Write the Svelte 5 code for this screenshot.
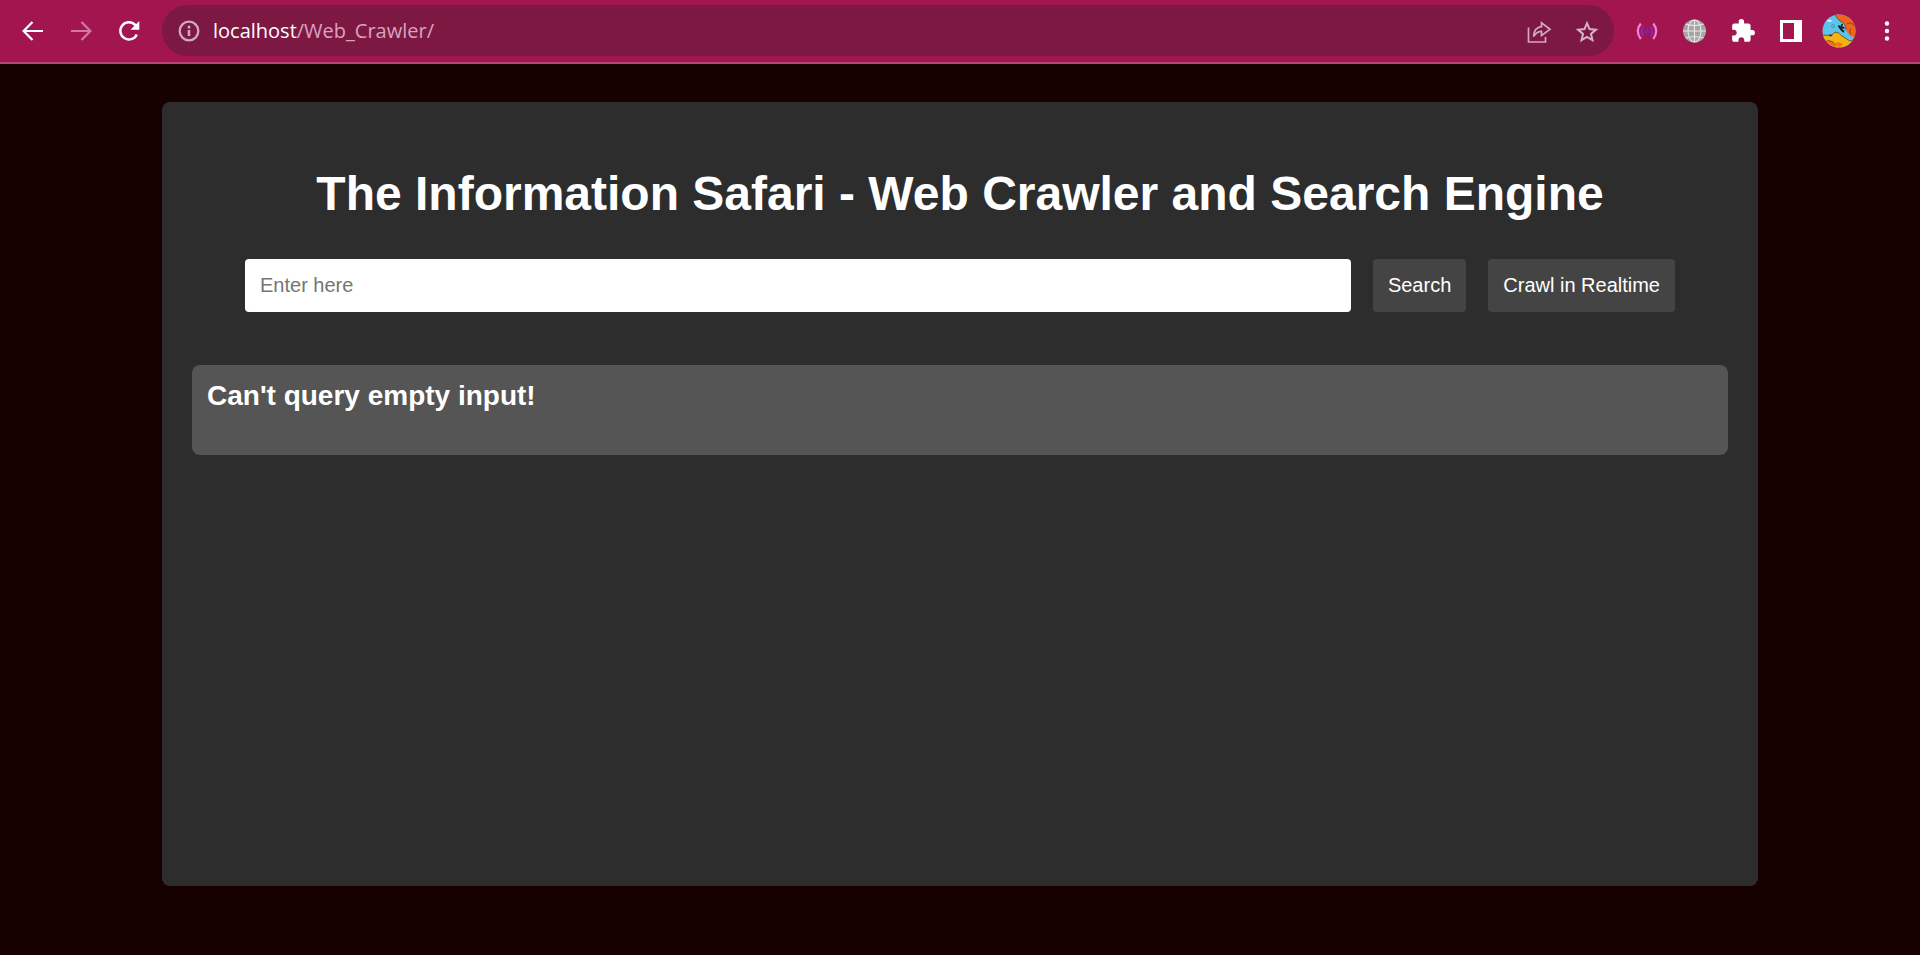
<script>
  let query = $state('');
  let address = $state('localhost/Web_Crawler/');
</script>

<div class="window">
  <header class="toolbar">
    <button class="tool" aria-label="Back">
      <svg width="30" height="30" viewBox="0 0 30 30" fill="none" stroke="#fff" stroke-width="2.2">
        <path d="M25 15H6M14.5 6L5.600 15l8.900 9" />
      </svg>
    </button>
    <button class="tool" aria-label="Forward" disabled>
      <svg width="30" height="30" viewBox="0 0 30 30" fill="none" stroke="#d277a3" stroke-width="2.2">
        <path d="M5 15h19M15.500 6l8.900 9-8.900 9" />
      </svg>
    </button>
    <button class="tool" aria-label="Reload">
      <svg width="30" height="30" viewBox="0 0 30 30">
        <path d="M22.800 18.400A8.600 8.600 0 1 1 21.600 9.400" fill="none" stroke="#fff" stroke-width="2.4" />
        <path d="M25.300 5v8.800h-8.800z" fill="#fff" />
      </svg>
    </button>

    <div class="omnibox">
      <button class="site" aria-label="View site information">
        <svg width="24" height="24" viewBox="0 0 24 24">
          <circle cx="12" cy="12" r="9.300" fill="none" stroke="#cdaabd" stroke-width="2.3" />
          <path d="M10.700 11h2.600v6h-2.600zM10.700 6.800h2.600v2.600h-2.600z" fill="#cdaabd" />
        </svg>
      </button>
      <a class="url" href={'http://' + address}>localhost<span>/Web_Crawler/</span></a>
      <button class="tool" aria-label="Share this page">
        <svg width="30" height="30" viewBox="0 0 30 30" fill="none" stroke="#cfa9bd" stroke-width="1.700">
          <path d="M4.500 11.500V26H21.500V21" />
          <path d="M9.500 20.500C10 14.500 13 11 17.500 10.600V6.800L26 13.300L17.500 19.600V15.400C14 15.400 11.700 17 9.500 20.500Z" />
        </svg>
      </button>
      <button class="tool" aria-label="Bookmark this page">
        <svg width="30" height="30" viewBox="0 0 30 30" fill="none" stroke="#d3b4c4" stroke-width="2">
          <path d="M15 7.200l2.500 5.900 6.400.600-4.900 4.200 1.500 6.300-5.500-3.300-5.500 3.300 1.500-6.300-4.900-4.200 6.400-.600z" />
        </svg>
      </button>
    </div>

    <button class="tool" aria-label="Signal extension">
      <svg width="30" height="30" viewBox="0 0 30 30" fill="none" stroke-width="2.2">
        <path d="M8.800 7.500q-6 7.500 0 15.500M21.200 7.500q6 7.500 0 15.500" stroke="#ee86dc" />
        <path d="M11.500 10.500q-3.800 4.700 0 9.400M18.500 10.500q3.800 4.700 0 9.400" stroke="#a01f9f" />
        <circle cx="15" cy="15.200" r="2.500" fill="#6f28ac" />
      </svg>
    </button>
    <button class="tool" aria-label="Web extension">
      <svg width="30" height="30" viewBox="0 0 30 30">
        <circle cx="14.500" cy="15" r="11.500" fill="#a5a5a5" />
        <g fill="none" stroke="#e8e8e8" stroke-width="1.100">
          <ellipse cx="14.500" cy="15" rx="6.500" ry="11" />
          <path d="M14.500 4v22M3 15h23M5.500 8q9 3 18 0M5.500 22q9-3 18 0" />
        </g>
      </svg>
    </button>
    <button class="tool" aria-label="Extensions">
      <svg width="26" height="26" viewBox="0 0 24 24" fill="#fff">
        <path d="M20.500 11H19V7c0-1.100-.9-2-2-2h-4V3.500a2.500 2.500 0 0 0-5 0V5H4c-1.100 0-1.990.9-1.990 2v3.800H3.500c1.490 0 2.700 1.210 2.700 2.700s-1.210 2.700-2.700 2.700H2V20c0 1.100.9 2 2 2h3.800v-1.500c0-1.490 1.210-2.700 2.700-2.700 1.490 0 2.700 1.210 2.700 2.700V22H17c1.100 0 2-.9 2-2v-4h1.500a2.500 2.500 0 0 0 0-5z" />
      </svg>
    </button>
    <button class="tool" aria-label="Side panel">
      <svg width="22" height="22" viewBox="0 0 22 22">
        <path d="M0 0h22v22H0zM3 3v16h11V3z" fill="#fff" fill-rule="evenodd" />
      </svg>
    </button>
    <button class="tool" aria-label="Profile">
      <svg width="34" height="34" viewBox="0 0 34 34">
        <defs><clipPath id="face"><circle cx="17" cy="17" r="16.500" /></clipPath></defs>
        <g clip-path="url(#face)">
          <path d="M0 0h34v34H0z" fill="#5cc3ea" />
          <path d="M13 0q1 4 5 7 6 2 6 9l4 6 6 2V0z" fill="#f3651c" />
          <path d="M0 21q5 0 9 1l4-4q4 0 7 4l8 5 3-1 3 1v8H0z" fill="#f6b30d" />
          <path d="M2 28q5-3 9 0l3 6H2zM13 29q4-2 8 1l-4 4z" fill="#ee751b" />
          <path d="M13 0q1 4 5 7 6 2 6 9M0 21q5 0 9 1l4-4q4 0 7 4l8 5 3-1M2 28q5-3 9 0l3 4M25 10q5-3 7 2M29 14q-3 3 0 6" fill="none" stroke="#5a4528" stroke-width=".8" />
          <path d="M16.500 11.500q2 4 5.500 6.500M20.500 10q-3 3.500 2 4" fill="none" stroke="#15191e" stroke-width="1.700" />
          <path d="M7 20l2 2.500 1.500-1.500z" fill="#15191e" />
          <path d="M4.500 7q3-3 6 0-3 2-6 0z" fill="#d8eef5" />
          <circle cx="11" cy="12" r="1.500" fill="none" stroke="#3f93b4" stroke-width=".8" />
        </g>
      </svg>
    </button>
    <button class="tool" aria-label="Menu">
      <svg width="30" height="30" viewBox="0 0 30 30" fill="#fff">
        <circle cx="15" cy="7.500" r="2.200" /><circle cx="15" cy="15" r="2.200" /><circle cx="15" cy="22.500" r="2.200" />
      </svg>
    </button>
  </header>

  <main class="card">
    <h1>The Information Safari - Web Crawler and Search Engine</h1>
    <form onsubmit={(event) => event.preventDefault()}>
      <input type="text" aria-label="Search query" placeholder="Enter here" bind:value={query} />
      <button class="action" type="submit">Search</button>
      <button class="action" type="button">Crawl in Realtime</button>
    </form>
    <section class="result">
      <h2>Can't query empty input!</h2>
    </section>
  </main>
</div>

<style>
  :global(body) {
    margin: 0;
    background: #170000;
  }

  .window {
    box-sizing: border-box;
    min-height: 100vh;
    display: flex;
    flex-direction: column;
    padding-bottom: 69px;
    font-family: 'Liberation Sans', Arial, sans-serif;
    color: #fff;
  }

  button {
    border: 0;
    padding: 0;
    background: none;
    color: inherit;
    font: inherit;
  }

  svg {
    display: block;
  }

  .toolbar {
    display: flex;
    align-items: center;
    padding: 5px 9px 6px;
    background: #a2154f;
    border-bottom: 2px solid #b44778;
  }

  .tool {
    flex: none;
    width: 48px;
    height: 48px;
    display: grid;
    place-items: center;
  }

  .omnibox {
    flex: 1;
    box-sizing: border-box;
    height: 51px;
    margin: 0 9px;
    padding: 0 3px 0 15px;
    display: flex;
    align-items: center;
    border-radius: 26px;
    background: #7d1843;
  }

  .site {
    width: 24px;
    height: 24px;
  }

  .url {
    flex: 1;
    margin-left: 12px;
    font-family: 'Open Sans', sans-serif;
    font-size: 20px;
    line-height: 28px;
    color: #fff;
    text-decoration: none;
  }

  .url span {
    color: #d8a3bd;
  }

  .card {
    box-sizing: border-box;
    flex: 1;
    width: calc(80% + 60px);
    margin: 38px auto 0;
    padding: 63px 30px 30px;
    border-radius: 8px;
    background: #2d2d2d;
  }

  h1 {
    margin: 0 0 37px;
    font-size: 48px;
    line-height: 57px;
    text-align: center;
  }

  form {
    display: flex;
    justify-content: center;
    gap: 22px;
    margin-bottom: 53px;
    font-size: 20px;
    line-height: 23px;
  }

  input {
    box-sizing: border-box;
    width: 72%;
    padding: 15px;
    border: 0;
    border-radius: 4px;
    background: #fff;
    color: #222;
    font: inherit;
  }

  input::placeholder {
    color: #757575;
  }

  .action {
    padding: 15px;
    border-radius: 4px;
    background: #444;
  }

  .result {
    padding: 15px 15px 43px;
    border-radius: 8px;
    background: #555;
  }

  h2 {
    margin: 0;
    font-size: 28px;
    line-height: 32px;
  }
</style>
